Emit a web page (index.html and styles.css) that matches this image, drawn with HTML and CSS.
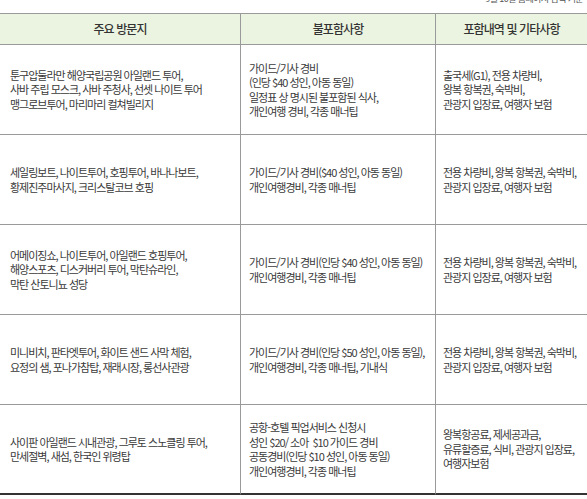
FILE: index.html
```html
<!DOCTYPE html>
<html lang="ko">
<head>
<meta charset="utf-8">
<link rel="stylesheet" href="styles.css">
</head>
<body>
<div class="note"><p>9월 10일 홈페이지 검색 기준</p></div>
<div class="table">
  <div class="cell head c1">주요 방문지</div>
  <div class="cell head c2">불포함사항</div>
  <div class="cell head c3">포함내역 및 기타사항</div>

  <div class="cell c1"><p>툰구압둘라만 해양국립공원 아일랜드 투어,<br>사바 주립 모스크, 사바 주청사, 선셋 나이트 투어<br>맹그로브투어, 마리마리 컬쳐빌리지</p></div>
  <div class="cell c2"><p>가이드/기사 경비<br>(인당 $40 성인, 아동 동일)<br>일정표 상 명시된 불포함된 식사,<br>개인여행 경비, 각종 매너팁</p></div>
  <div class="cell c3"><p>출국세(G1), 전용 차량비,<br>왕복 항복권, 숙박비,<br>관광지 입장료, 여행자 보험</p></div>

  <div class="cell c1"><p>세일링보트, 나이트투어, 호핑투어, 바나나보트,<br>황제진주마사지, 크리스탈코브 호핑</p></div>
  <div class="cell c2"><p>가이드/기사 경비($40 성인, 아동 동일)<br>개인여행경비, 각종 매너팁</p></div>
  <div class="cell c3"><p>전용 차량비, 왕복 항복권, 숙박비,<br>관광지 입장료, 여행자 보험</p></div>

  <div class="cell c1"><p>어메이징쇼, 나이트투어, 아일랜드 호핑투어,<br>해양스포츠, 디스커버리 투어, 막탄슈라인,<br>막탄 산토니뇨 성당</p></div>
  <div class="cell c2"><p>가이드/기사 경비(인당 $40 성인, 아동 동일)<br>개인여행경비, 각종 매너팁</p></div>
  <div class="cell c3"><p>전용 차량비, 왕복 항복권, 숙박비,<br>관광지 입장료, 여행자 보험</p></div>

  <div class="cell c1"><p>미니비치, 판타엣투어, 화이트 샌드 사막 체험,<br>요정의 샘, 포나가참탑, 재래시장, 롱선사관광</p></div>
  <div class="cell c2"><p>가이드/기사 경비(인당 $50 성인, 아동 동일),<br>개인여행경비, 각종 매너팁, 기내식</p></div>
  <div class="cell c3"><p>전용 차량비, 왕복 항복권, 숙박비,<br>관광지 입장료, 여행자 보험</p></div>

  <div class="cell c1 last"><p>사이판 아일랜드 시내관광, 그루토 스노클링 투어,<br>만세절벽, 새섬, 한국인 위령탑</p></div>
  <div class="cell c2 last"><p>공항-호텔 픽업서비스 신청시<br>성인 $20/ 소아 &nbsp;$10 가이드 경비<br>공동경비(인당 $10 성인, 아동 동일)<br>개인여행경비, 각종 매너팁</p></div>
  <div class="cell c3 last"><p>왕복항공료, 제세공과금,<br>유류할증료, 식비, 관광지 입장료,<br>여행자보험</p></div>
</div>
</body>
</html>
```

FILE: styles.css
```css
html, body {
  margin: 0;
  padding: 0;
  background: #ffffff;
}

body {
  width: 587px;
  height: 499px;
  overflow: hidden;
  font-family: "Noto Sans CJK KR", "Noto Sans", sans-serif;
  color: #3a3a3a;
}

.note {
  height: 13px;
  overflow: hidden;
}

.note p {
  margin: -6px 4px 0 0;
  font-size: 9px;
  line-height: 10px;
  letter-spacing: -0.6px;
  text-align: right;
  color: #555;
}

.table {
  display: grid;
  grid-template-columns: 240px 195px 152px;
  grid-auto-rows: 90px;
  grid-template-rows: 32px;
}

.cell {
  box-sizing: border-box;
  border-bottom: 1px solid #9a9a9a;
  display: flex;
  align-items: center;
  font-size: 11px;
  line-height: 14.5px;
  letter-spacing: -1px;
  white-space: nowrap;
}

.cell p {
  margin: 0;
}

.c1 {
  padding-left: 10px;
}

.c2 {
  border-left: 1px solid #9a9a9a;
  padding-left: 8px;
}

.c3 {
  border-left: 1px solid #9a9a9a;
  padding-left: 7px;
}

.head {
  background: #ebf4e0;
  border-top: 1px solid #9a9a9a;
  justify-content: center;
  padding-left: 0;
  font-size: 12px;
  font-weight: 500;
  letter-spacing: -0.9px;
  color: #333;
}

.last {
  border-bottom: 2px solid #333333;
}
```
